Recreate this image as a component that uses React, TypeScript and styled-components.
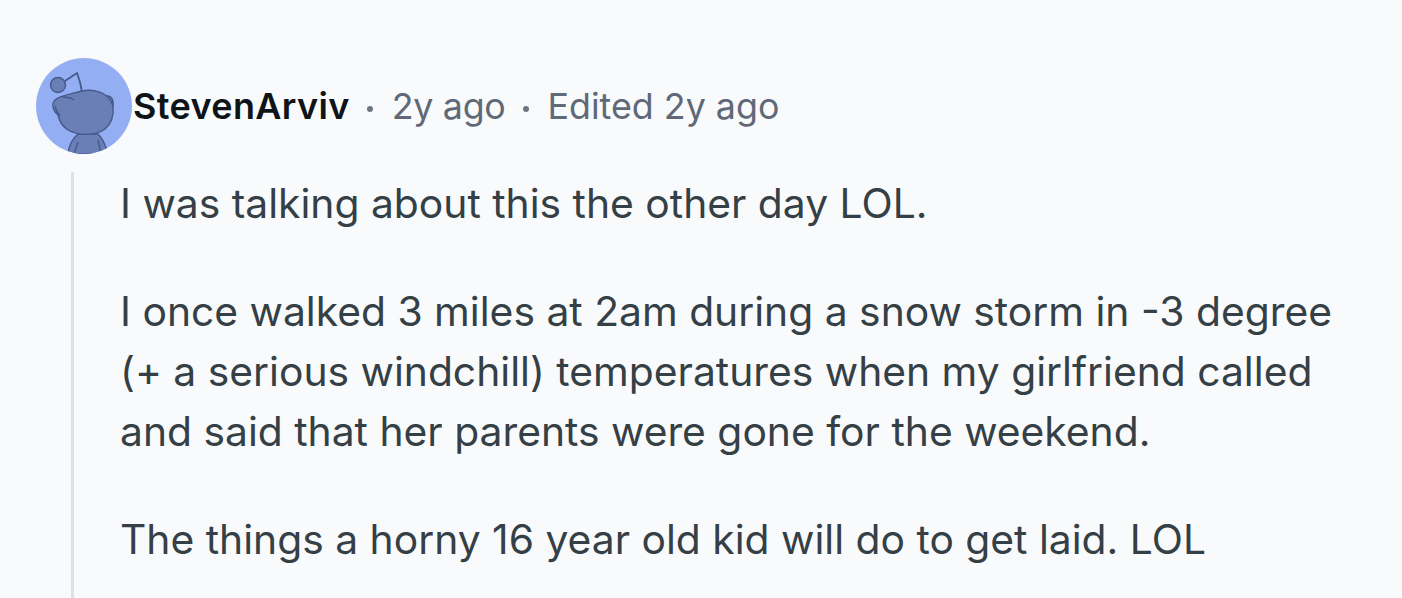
import React from "react";
import styled, { createGlobalStyle } from "styled-components";

const Global = createGlobalStyle`
  html, body { margin: 0; padding: 0; background: #f9fafc; }
  body { width: 1402px; height: 598px; overflow: hidden; font-family: Inter, "Noto Sans", sans-serif; }
`;

const Page = styled.main`
  width: 1402px;
  height: 598px;
  box-sizing: border-box;
  padding: 58px 0 0 36px;
  background: #f9fafc;
  overflow: hidden;
`;

const Header = styled.header`
  display: flex;
  align-items: center;
  height: 96px;
`;

const Avatar = styled.svg`
  width: 96px;
  height: 96px;
  flex: none;
`;

const Name = styled.span`
  font-size: 36px;
  font-weight: 600;
  letter-spacing: 0.35px;
  color: #0f1419;
  margin-left: 1px;
`;

const Meta = styled.span<{ $tight?: boolean }>`
  font-size: 35.8px;
  font-weight: 400;
  letter-spacing: ${(p) => (p.$tight ? "-0.3px" : "0")};
  color: #5f6977;
`;

const Dot = styled.span`
  width: 6px;
  height: 6px;
  border-radius: 50%;
  background: #6b7583;
  margin: 6px 19px 0 17px;
  flex: none;
`;

const Thread = styled.section`
  margin: 18px 0 0 35px;
  padding: 1px 0 0 46px;
  border-left: 3px solid #d9e2e6;
  height: 440px;
`;

const Para = styled.p`
  margin: 0 0 48px;
  font-size: 40.8px;
  font-weight: 400;
  line-height: 60px;
  color: #353f46;
  white-space: nowrap;
`;

export default function App() {
  return (
    <Page>
      <Global />
      <Header>
        <Avatar viewBox="0 0 96 96" aria-label="avatar">
          <defs>
            <clipPath id="c"><circle cx="48" cy="48" r="48" /></clipPath>
          </defs>
          <circle cx="48" cy="48" r="48" fill="#94aef3" />
          <g clipPath="url(#c)" stroke="#46598c" strokeWidth="1.4" fill="#6a7fb5">
            <path d="M32 96 C33 86 37 80 42 76 L62 76 C66 80 69 86 71 93 L71 96Z" />
            <path d="M42 84 L38 96 M62 82 L65 96" fill="none" />
            <path d="M46 34 C45 27 43 20 41 15 L29 23" fill="none" strokeWidth="1.8" />
            <circle cx="22" cy="27" r="7.5" />
            <path d="M46 33 C55 31 65 33 71 38 C75 37 78 42 77 48 C78 58 75 66 69 71 C60 78 42 78 32 72 C26 68 23 62 22 57 C17 53 15 46 19 42 C24 37 36 36 46 33Z" />
            <path d="M71 38 C74 41 76 44 77 48" fill="none" />
            <path d="M27 39 C31 39 35 40 38 42 M19 48 C20 53 22 55 24 58" fill="none" />
          </g>
        </Avatar>
        <Name>StevenArviv</Name>
        <Dot />
        <Meta $tight>2y ago</Meta>
        <Dot />
        <Meta>Edited 2y ago</Meta>
      </Header>
      <Thread>
        <Para>I was talking about this the other day LOL.</Para>
        <Para>
          I once walked 3 miles at 2am during a snow storm in -3 degree
          <br />
          (+ a serious windchill) temperatures when my girlfriend called
          <br />
          and said that her parents were gone for the weekend.
        </Para>
        <Para>The things a horny 16 year old kid will do to get laid. LOL</Para>
      </Thread>
    </Page>
  );
}
